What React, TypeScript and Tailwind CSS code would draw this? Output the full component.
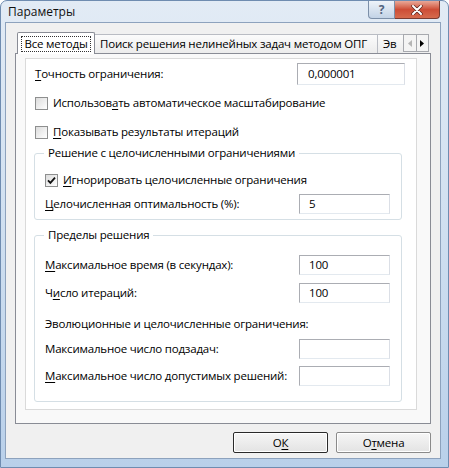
import React from 'react';

const Key: React.FC<{ children: React.ReactNode }> = ({ children }) => (
    <span className="underline decoration-1 underline-offset-[2px]">{children}</span>
);

const CheckBox: React.FC<{ checked?: boolean }> = ({ checked }) => (
    <span className="flex h-[13px] w-[13px] shrink-0 items-center justify-center border border-[#8e8f8f] bg-linear-to-br from-[#dcdcdc] to-white">
        {checked && (
            <svg width="9" height="9" viewBox="0 0 9 9">
                <path d="M1 4.3 L3.4 6.8 L8 1.6" fill="none" stroke="#111" strokeWidth="1.8" />
            </svg>
        )}
    </span>
);

const Field: React.FC<{ value?: string }> = ({ value }) => (
    <div className="flex h-[20px] w-[91px] shrink-0 items-center border border-[#abadb3] border-b-[#e3e9ef] border-r-[#dbdfe6] bg-white pl-[9px]">
        {value}
    </div>
);

interface RowProps {
    label: React.ReactNode;
    value?: string;
    className?: string;
}

const FieldRow: React.FC<RowProps> = ({ label, value, className }) => (
    <div className={`flex h-[20px] items-center justify-between whitespace-nowrap ${className ?? ''}`}>
        <span>{label}</span>
        <Field value={value} />
    </div>
);

const CheckRow: React.FC<{ checked?: boolean; children: React.ReactNode; className?: string }> = ({
    checked,
    children,
    className,
}) => (
    <div className={`flex h-[16px] items-center gap-[5px] whitespace-nowrap ${className ?? ''}`}>
        <CheckBox checked={checked} />
        <span>{children}</span>
    </div>
);

export default function App() {
    return (
        <div className="flex h-[468px] w-[449px] flex-col rounded-t-[7px] border border-[#6f8cb0] bg-linear-to-b from-[#e2ebf5] via-[#cfdff0] to-[#b9d0ea] pb-[8px] pl-[4px] pr-[7px] font-['Open_Sans','Noto_Sans',sans-serif] text-[11.5px] leading-[16px] tracking-[-0.2px] text-black">
            {/* title bar */}
            <div className="flex h-[21px] shrink-0 items-start justify-between">
                <span className="pl-[3px] pt-[3px] text-[12px] tracking-normal text-[#111]">Параметры</span>
                <div className="mr-[1px] flex">
                    <div className="flex h-[18px] w-[27px] items-center justify-center rounded-bl-[4px] border border-t-0 border-[#7c8fa8] bg-linear-to-b from-[#eef3f9] to-[#c3d3e6] text-[12px] font-bold text-[#52647e]">
                        ?
                    </div>
                    <div className="flex h-[18px] w-[45px] items-center justify-center rounded-br-[4px] border border-l-0 border-t-0 border-[#7b3b30] bg-linear-to-b from-[#e8a898] via-[#cd4d36] to-[#d66a4c]">
                        <svg width="12" height="10" viewBox="0 0 12 10">
                            <path d="M2 1 L10 9 M10 1 L2 9" stroke="#5a241b" strokeWidth="3.4" strokeLinecap="round" />
                            <path d="M2 1 L10 9 M10 1 L2 9" stroke="#ffffff" strokeWidth="2" strokeLinecap="round" />
                        </svg>
                    </div>
                </div>
            </div>

            {/* client area */}
            <div className="flex flex-1 flex-col border border-[#8da2bd] bg-[#f0f0f0] px-[9px]">
                {/* tab strip */}
                <div className="relative z-10 mb-[-1px] mt-[9px] flex h-[22px] items-end whitespace-nowrap">
                    <div className="ml-[2px] flex h-[22px] w-[78px] shrink-0 items-start justify-center rounded-t-[2px] border border-b-0 border-[#898c95] bg-white pt-[3px]">
                        <span className="border border-dotted border-[#333] px-[2px] pb-[1px] leading-[13px]">Все методы</span>
                    </div>
                    <div className="mb-[1px] flex h-[19px] w-[283px] shrink-0 items-center border-r border-t border-[#b9bcc3] bg-linear-to-b from-[#fbfbfb] to-[#ececec] pl-[5px]">
                        Поиск решения нелинейных задач методом ОПГ
                    </div>
                    <div className="mb-[1px] flex h-[19px] min-w-0 flex-1 items-center overflow-hidden border-t border-[#b9bcc3] bg-linear-to-b from-[#fbfbfb] to-[#ececec] pl-[5px]">
                        Эв
                    </div>
                    <div className="mb-[2px] mr-[2px] flex h-[18px] w-[26px] shrink-0 border border-[#a7a9ae] bg-[#f4f4f4]">
                        <div className="flex flex-1 items-center justify-center border-r border-[#a7a9ae]">
                            <svg width="4" height="7" viewBox="0 0 4 7">
                                <path d="M4 0 L0 3.5 L4 7 Z" fill="#b5b5b5" />
                            </svg>
                        </div>
                        <div className="flex flex-1 items-center justify-center">
                            <svg width="4" height="7" viewBox="0 0 4 7">
                                <path d="M0 0 L4 3.5 L0 7 Z" fill="#000" />
                            </svg>
                        </div>
                    </div>
                </div>

                {/* tab page */}
                <div className="h-[371px] shrink-0 border border-[#898c95] bg-[#f9f9f9] pl-[9px] pr-[13px] pt-[4px]">
                    <div className="flex h-[352px] flex-col border border-[#dadada] bg-white pl-[8px] pr-[11px] pt-[4px]">
                        <div className="flex h-[22px] items-center justify-between pl-[1px]">
                            <span>
                                <Key>Т</Key>очность ограничения:
                            </span>
                            <div className="flex h-[22px] w-[108px] items-center border border-[#abadb3] border-b-[#e3e9ef] border-r-[#dbdfe6] bg-white pl-[10px]">
                                0,000001
                            </div>
                        </div>

                        <CheckRow className="mt-[10px] pl-[1px]">
                            Использов<Key>а</Key>ть автоматическое масштабирование
                        </CheckRow>
                        <CheckRow className="mt-[13px] pl-[1px]">
                            <Key>П</Key>оказывать результаты итераций
                        </CheckRow>

                        <fieldset className="mr-[3px] mt-[5px] rounded-[3px] border border-[#d5dfe5] pb-[5px] pl-[10px] pr-[11px]">
                            <legend className="ml-[-1px] px-[4px]">Решение с целочисленными ограничениями</legend>
                            <CheckRow checked className="mt-[11px]">
                                <Key>И</Key>гнорировать целочисленные ограничения
                            </CheckRow>
                            <FieldRow
                                className="mt-[6px]"
                                label={
                                    <>
                                        <Key>Ц</Key>елочисленная оптимальность (%):
                                    </>
                                }
                                value="5"
                            />
                        </fieldset>

                        <fieldset className="mr-[3px] mt-[7px] rounded-[3px] border border-[#d5dfe5] pb-[15px] pl-[10px] pr-[11px]">
                            <legend className="ml-[-1px] px-[4px]">Пределы решения</legend>
                            <FieldRow
                                className="mt-[12px]"
                                label={
                                    <>
                                        <Key>М</Key>аксимальное время (в секундах):
                                    </>
                                }
                                value="100"
                            />
                            <FieldRow
                                className="mt-[8px]"
                                label={
                                    <>
                                        Ч<Key>и</Key>сло итераций:
                                    </>
                                }
                                value="100"
                            />
                            <div className="mt-[13px] h-[16px] whitespace-nowrap">Эволюционные и целочисленные ограничения:</div>
                            <FieldRow className="mt-[7px]" label="Максимальное число подзадач:" />
                            <FieldRow
                                className="mt-[7px]"
                                label={
                                    <>
                                        <Key>М</Key>аксимальное число допустимых решений:
                                    </>
                                }
                            />
                        </fieldset>
                    </div>
                </div>

                {/* buttons */}
                <div className="mt-[8px] flex justify-end gap-[8px]">
                    <button className="flex h-[21px] w-[95px] items-center justify-center rounded-[2px] border border-[#2a2a2a] bg-linear-to-b from-[#f6f6f6] to-[#e3e3e3] shadow-[inset_0_0_0_1px_#ffffff]">
                        О<Key>К</Key>
                    </button>
                    <button className="flex h-[21px] w-[95px] items-center justify-center rounded-[2px] border border-[#8a8a8a] bg-linear-to-b from-[#f6f6f6] to-[#e3e3e3] shadow-[inset_0_0_0_1px_#ffffff]">
                        О<Key>т</Key>мена
                    </button>
                </div>
            </div>
        </div>
    );
}
